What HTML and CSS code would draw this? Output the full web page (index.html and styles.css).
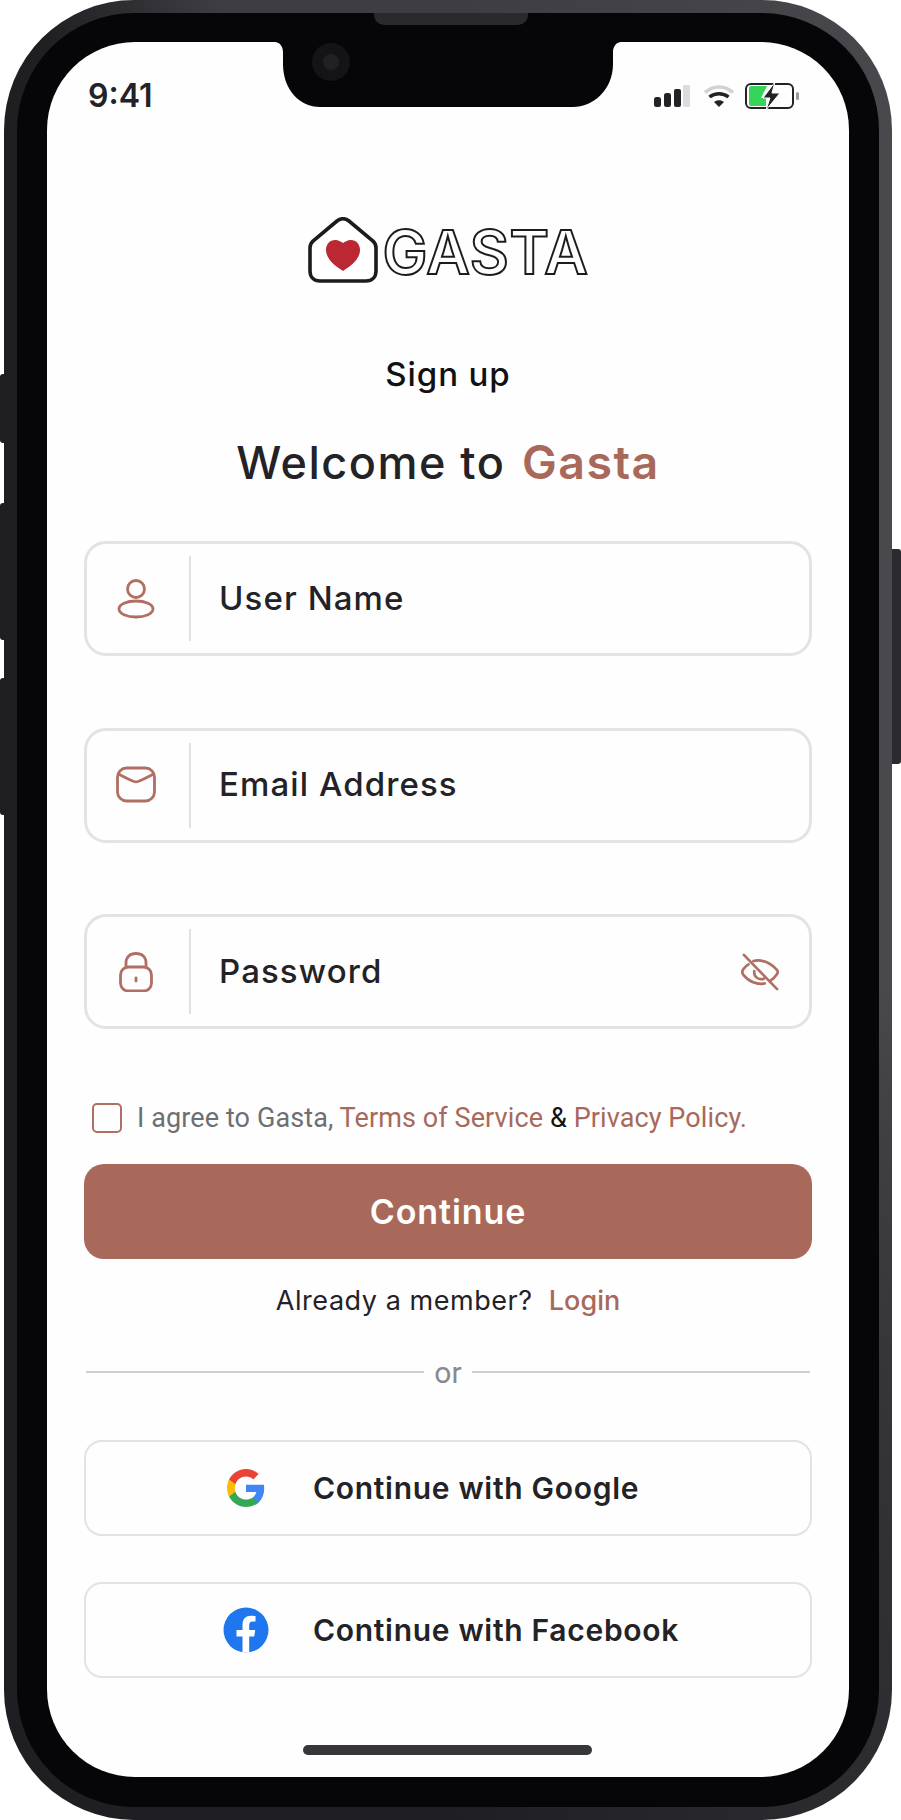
FILE: index.html
```html
<!DOCTYPE html>
<html lang="en">
<head>
    <meta charset="UTF-8">
    <meta name="viewport" content="width=device-width, initial-scale=1.0">
    <title>Gasta Sign up</title>
    <link rel="stylesheet" href="styles.css">
</head>
<body>

    <div class="device">
        <!-- Side buttons -->
        <span class="side-btn btn-mute"></span>
        <span class="side-btn btn-up"></span>
        <span class="side-btn btn-down"></span>
        <span class="side-btn btn-power"></span>

        <div class="frame">
            <span class="speaker"></span>

            <div class="screen">
                <!-- Notch with camera -->
                <svg class="notch" width="346" height="65" viewBox="0 0 346 65">
                    <path d="M0 0H346C342 0 338 4 338 10V22C338 48 318 65 298 65H45C25 65 8 48 8 22V10C8 4 4 0 0 0Z" fill="#060508"/>
                    <circle cx="56" cy="20" r="19" fill="#141416"/>
                    <circle cx="56" cy="20" r="8" fill="#212123"/>
                </svg>

                <!-- Status bar -->
                <div class="status-bar">
                    <span class="time">9:41</span>
                    <div class="status-icons">
                        <svg width="36" height="22" viewBox="0 0 36 22">
                            <rect x="0" y="12" width="7" height="10" rx="2.5" fill="#232226"/>
                            <rect x="10" y="8" width="7" height="14" rx="2.5" fill="#232226"/>
                            <rect x="20" y="4" width="7" height="18" rx="2" fill="#232226"/>
                            <rect x="29" y="0" width="7" height="22" rx="1" fill="#dcdcde"/>
                        </svg>
                        <svg class="wifi" width="32" height="24" viewBox="0 0 32 24">
                            <path d="M2 8.5C10 1 22 1 30 8.5" fill="none" stroke="#d2d2d4" stroke-width="3.5"/>
                            <path d="M6.5 13C12 8.5 20 8.5 25.5 13" fill="none" stroke="#232226" stroke-width="3.5"/>
                            <path d="M11 18C14 15.5 18 15.5 21 18L16 23Z" fill="#232226"/>
                        </svg>
                        <svg width="55" height="28" viewBox="0 0 55 28">
                            <rect x="1" y="2" width="47" height="24" rx="5" fill="none" stroke="#232226" stroke-width="2"/>
                            <path d="M4 6C4 5 5 4 6 4H22L16 16H21V24H6C5 24 4 23 4 22Z" fill="#37d45c"/>
                            <path d="M30 0L18 16H25L21 28L35 11H27Z" fill="#232226" stroke="#fff" stroke-width="1"/>
                            <rect x="51" y="10" width="3" height="8" rx="1.5" fill="#9a9a9c"/>
                        </svg>
                    </div>
                </div>

                <div class="content">
                    <!-- Logo -->
                    <div class="logo">
                        <svg width="70" height="66" viewBox="0 0 70 66">
                            <path d="M29 4L5 24C3 26 2 28 2 31V54C2 60 6 64 12 64H58C64 64 68 60 68 54V31C68 28 67 26 65 24L41 4C37 1 33 1 29 4Z" fill="#fff" stroke="#1c1c1e" stroke-width="3.6"/>
                            <path d="M35 54C29 50 18 43 18 33C18 27 22 23 27 23C31 23 33 25 35 26C37 25 39 23 43 23C48 23 52 27 52 33C52 43 41 50 35 54Z" fill="#bb2733"/>
                        </svg>
                        <span class="logo-text">GASTA</span>
                    </div>

                    <h2 class="page-title">Sign up</h2>
                    <h1 class="welcome">Welcome to <span class="brand">Gasta</span></h1>

                    <!-- Fields -->
                    <div class="field">
                        <div class="field-icon">
                            <svg class="line-icon" width="40" height="40" viewBox="0 0 40 40">
                                <circle cx="20" cy="10" r="8.500"/>
                                <ellipse cx="20" cy="30" rx="17" ry="8"/>
                            </svg>
                        </div>
                        <span class="field-label">User Name</span>
                    </div>
                    <div class="field">
                        <div class="field-icon">
                            <svg class="line-icon" width="40" height="40" viewBox="0 0 40 40">
                                <rect x="1.5" y="3" width="37" height="33" rx="9"/>
                                <path d="M2.5 9C8 12 14 15 18 16.5C19.5 17 20.5 17 22 16.5C26 15 32 12 37.5 9"/>
                            </svg>
                        </div>
                        <span class="field-label">Email Address</span>
                    </div>
                    <div class="field">
                        <div class="field-icon">
                            <svg class="line-icon" width="40" height="40" viewBox="0 0 40 40">
                                <rect x="4.5" y="15" width="31" height="24" rx="8"/>
                                <path d="M10 15V11C10 5 14 1.500 20 1.500C26 1.500 30 5 30 11V15"/>
                                <path d="M20 26V29"/>
                            </svg>
                        </div>
                        <span class="field-label">Password</span>
                        <svg class="line-icon eye" width="38" height="38" viewBox="0 0 40 40">
                            <path d="M13 8.5C21 6 31 10 38 18C39 19.500 39 20.500 38 22C36 25 33.500 27.500 31 29M25 32C17 34 8 30 2.500 23C1 21 1 19 2.500 17C4 15 6 13 8 12"/>
                            <path d="M24 27C19 29 13 25 14 19"/>
                            <path d="M3 2L38 38"/>
                        </svg>
                    </div>

                    <!-- Terms -->
                    <div class="agree">
                        <span class="checkbox"></span>
                        <p class="agree-text">I agree to Gasta, <a href="#">Terms of Service</a> <span class="amp">&amp;</span> <a href="#">Privacy Policy.</a></p>
                    </div>

                    <button class="continue-btn">Continue</button>

                    <p class="member">Already a member? <a href="#">Login</a></p>

                    <div class="or-row">
                        <span class="or-line"></span>
                        <span class="or-text">or</span>
                        <span class="or-line"></span>
                    </div>

                    <!-- Social logins -->
                    <button class="social-btn">
                        <span class="social-icon">
                            <svg width="38" height="38" viewBox="0 0 24 24">
                                <path d="M23.5 12.3c0-.8-.1-1.600-.2-2.300H12v4.500h6.500c-.3 1.500-1.100 2.700-2.400 3.600v3h3.900c2.200-2.100 3.500-5.100 3.500-8.800z" fill="#4285f4"/>
                                <path d="M12 24c3.200 0 6-1.100 8-2.900l-3.900-3c-1.100.7-2.500 1.200-4.100 1.200-3.100 0-5.800-2.100-6.700-5H1.300v3.100C3.300 21.300 7.300 24 12 24z" fill="#34a853"/>
                                <path d="M5.300 14.300c-.5-1.500-.5-3.100 0-4.600V6.600h-4c-1.700 3.300-1.700 7.500 0 10.800z" fill="#fbbc05"/>
                                <path d="M12 4.800c1.800 0 3.300.6 4.600 1.800l3.400-3.400C17.900 1.200 15.200 0 12 0 7.300 0 3.300 2.700 1.300 6.600l4 3.100c.9-2.800 3.600-4.900 6.700-4.900z" fill="#ea4335"/>
                            </svg>
                        </span>
                        <span>Continue with Google</span>
                    </button>
                    <button class="social-btn">
                        <span class="social-icon">
                            <svg width="46" height="46" viewBox="0 0 46 46">
                                <circle cx="23" cy="23" r="22.500" fill="#1f77f0"/>
                                <path d="M19.500 45.500V29.500H13.500V23H19.500V17.500C19.500 11.800 22.900 8.700 28 8.700C30.500 8.700 32.500 9.100 32.500 9.100V14.500H29.700C27 14.500 26.200 16.200 26.200 17.900V23H32.200L31.200 29.500H26.200V45.500Z" fill="#fff"/>
                            </svg>
                        </span>
                        <span>Continue with Facebook</span>
                    </button>

                    <span class="home-bar"></span>
                </div>
            </div>
        </div>
    </div>

</body>
</html>
```

FILE: styles.css
```css
body {
    margin: 0;
    background-color: #fff;
    font-family: Inter, "Liberation Sans", sans-serif;
}
.device {
    position: relative;
    width: 901px;
    height: 1820px;
    overflow: hidden;
}
.side-btn {
    position: absolute;
    left: 0;
    width: 6px;
    background-color: #1f1f22;
    border-radius: 3px 0 0 3px;
}
.btn-mute { top: 374px; height: 69px; }
.btn-up { top: 503px; height: 137px; }
.btn-down { top: 678px; height: 137px; }
.btn-power {
    left: 888px;
    top: 549px;
    width: 13px;
    height: 215px;
    background-color: #2b2a2e;
    border-radius: 0 3px 3px 0;
}
.frame {
    position: relative;
    box-sizing: border-box;
    margin-left: 4px;
    width: 888px;
    height: 1820px;
    padding: 29px 30px 30px;
    border: 13px solid transparent;
    border-radius: 130px;
    background:
        linear-gradient(#060508, #060508) padding-box,
        conic-gradient(#3e3d43 0deg, #49484d 30deg, #49484d 100deg, #2c2b2f 155deg, #1f1e22 180deg, #1f1f22 335deg, #3e3d43 346deg, #3e3d43 360deg) border-box;
}
.speaker {
    position: absolute;
    top: 0;
    left: 357px;
    width: 154px;
    height: 12px;
    background-color: #2a292d;
    border-radius: 0 0 10px 10px;
}
.screen {
    position: relative;
    height: 1735px;
    background-color: #fefefe;
    border-radius: 88px;
    overflow: hidden;
}
.notch {
    position: absolute;
    top: 0;
    left: 228px;
}
.status-bar {
    height: 65px;
    box-sizing: border-box;
    padding: 42px 49px 0 41px;
    display: flex;
    justify-content: space-between;
    align-items: center;
}
.time {
    font-size: 32px;
    font-weight: 600;
    color: #232226;
}
.status-icons {
    display: flex;
    align-items: center;
    gap: 13px;
}
.wifi {
    margin-right: -3px;
}
.content {
    padding: 0 37px;
    display: flex;
    flex-direction: column;
    align-items: center;
}
.logo {
    margin-top: 110px;
    height: 65px;
    display: flex;
    align-items: center;
    gap: 5px;
}
.logo-text {
    margin-top: 5px;
    font-size: 60px;
    line-height: 65px;
    font-weight: 600;
    color: #fefefe;
    -webkit-text-stroke: 2px #1c1c1e;
    letter-spacing: 0.5px;
}
.page-title {
    margin: 72px 0 0;
    font-size: 33px;
    line-height: 40px;
    font-weight: 500;
    letter-spacing: 0.9px;
    color: #111;
}
.welcome {
    margin: 43px 0 0;
    height: 50px;
    font-size: 45px;
    line-height: 50px;
    font-weight: 500;
    letter-spacing: 1.5px;
    color: #232226;
}
.brand {
    margin-left: 3px;
    font-size: 46.5px;
    font-weight: 600;
    color: #a8695a;
}
.field {
    box-sizing: border-box;
    width: 100%;
    height: 115px;
    margin-top: 54px;
    padding: 12px 30px 12px 0;
    display: flex;
    align-items: center;
    background-color: #fefefe;
    border: 3px solid #e3e3e6;
    border-radius: 22px;
}
.field + .field {
    margin-top: 71.5px;
}
.field-icon {
    box-sizing: border-box;
    width: 104px;
    height: 100%;
    padding-right: 5px;
    display: flex;
    align-items: center;
    justify-content: center;
    border-right: 2px solid #e0dfe2;
}
.field-label {
    margin-left: 28px;
    padding-bottom: 2px;
    flex-grow: 1;
    font-size: 33px;
    font-weight: 500;
    letter-spacing: 1.1px;
    color: #232226;
}
.line-icon {
    fill: none;
    stroke: #b06f62;
    stroke-width: 2.8;
    stroke-linecap: round;
    stroke-linejoin: round;
}
.agree {
    align-self: flex-start;
    margin: 73px 0 0 8px;
    height: 32px;
    display: flex;
    align-items: center;
    gap: 15px;
}
.checkbox {
    box-sizing: border-box;
    width: 30px;
    height: 30px;
    border: 2px solid #b06f62;
    border-radius: 5px;
}
.agree-text {
    margin: 0;
    font-family: Roboto, sans-serif;
    font-size: 27px;
    letter-spacing: 0.1px;
    color: #6e6e73;
}
.agree-text a {
    color: #a8695a;
    text-decoration: none;
}
.amp {
    color: #111;
}
.continue-btn {
    width: 100%;
    height: 95px;
    margin-top: 30px;
    border: none;
    border-radius: 20px;
    background-color: #a8695a;
    font-family: inherit;
    font-size: 34px;
    font-weight: 600;
    letter-spacing: 0.9px;
    color: #fff;
}
.member {
    margin: 24px 0 0;
    font-size: 27px;
    line-height: 36px;
    letter-spacing: 0.55px;
    color: #232226;
}
.member a {
    margin-left: 8px;
    font-weight: 500;
    letter-spacing: 0;
    color: #a8695a;
    text-decoration: none;
}
.or-row {
    width: 100%;
    margin-top: 38px;
    height: 30px;
    display: flex;
    align-items: center;
    padding: 0 2px;
    box-sizing: border-box;
    gap: 10px;
}
.or-line {
    flex-grow: 1;
    height: 2px;
    background-color: #cfcfd2;
}
.or-text {
    font-family: Roboto, sans-serif;
    font-size: 30px;
    color: #8a8a8e;
}
.social-btn {
    box-sizing: border-box;
    width: 100%;
    height: 96px;
    margin-top: 53px;
    padding: 0 0 0 137px;
    display: flex;
    align-items: center;
    gap: 44px;
    background-color: #fefefe;
    border: 2px solid #e3e3e6;
    border-radius: 18px;
    font-family: inherit;
    font-size: 30px;
    font-weight: 600;
    letter-spacing: 0.7px;
    color: #232226;
}
.social-btn + .social-btn {
    margin-top: 46px;
}
.social-icon {
    width: 46px;
    display: flex;
    justify-content: center;
}
.home-bar {
    width: 289px;
    height: 10px;
    margin: 67px 2px 0 0;
    background-color: #38363a;
    border-radius: 5px;
}
```
